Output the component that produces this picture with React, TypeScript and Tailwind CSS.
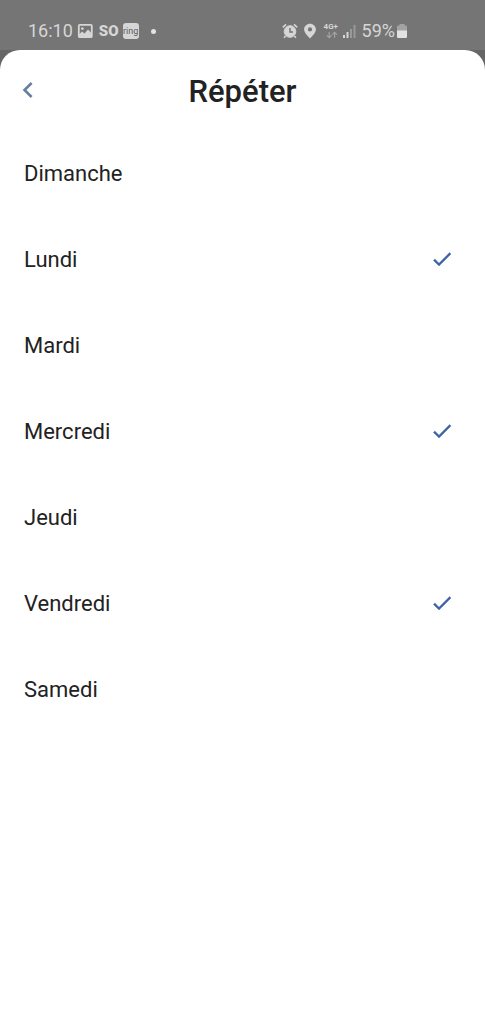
import { useState } from "react";

const days = [
  "Dimanche",
  "Lundi",
  "Mardi",
  "Mercredi",
  "Jeudi",
  "Vendredi",
  "Samedi",
];

function StatusBar() {
  return (
    <div className="flex h-[50px] items-center justify-between bg-[#757575] pt-3 pr-[78px] pl-7 text-lg leading-6 text-[#d6d6d6]">
      <div className="flex items-center">
        <span>16:10</span>
        <svg className="ml-1 size-4" viewBox="0 0 16 16" fill="none">
          <rect x="1.8" y="1.8" width="13" height="12.4" rx="1" stroke="currentColor" strokeWidth="1.8" />
          <circle cx="5.4" cy="5.6" r="1.3" fill="currentColor" />
          <path d="M2 14V11.5L5 8.5L7.5 10.5L11 6.5L14.4 10V14Z" fill="currentColor" />
        </svg>
        <span className="ml-1.5 text-[15px] font-black">SO</span>
        <span className="ml-1 flex size-4 items-center justify-center rounded-[3px] bg-[#d6d6d6] text-[9px] leading-4 text-[#5c5c5c]">
          ring
        </span>
        <span className="ml-3 size-[5px] rounded-full bg-[#e2e2e2]" />
      </div>
      <div className="flex items-center">
        <svg className="size-4" viewBox="0 0 16 16" fill="none" stroke="currentColor">
          <circle cx="8" cy="8.5" r="5.8" fill="currentColor" strokeWidth="1" />
          <path d="M8 5V9H11" stroke="#757575" strokeWidth="1.5" />
          <path d="M.8 4.4L4 1.4M15.2 4.4L12 1.4M3.6 13L2 14.8M12.4 13L14 14.8" strokeWidth="1.6" />
        </svg>
        <svg className="ml-1.5 h-4 w-3" viewBox="0 0 12 16" fill="currentColor">
          <path
            fillRule="evenodd"
            d="M6 .8C2.7 .8 .1 3.3 .1 6.4C.1 9.9 6 15.4 6 15.4S11.9 9.9 11.9 6.4C11.9 3.3 9.3 .8 6 .8ZM6 4.3A2.1 2.1 0 1 1 6 8.5A2.1 2.1 0 0 1 6 4.3Z"
          />
        </svg>
        <span className="ml-2 flex w-4 flex-col items-start">
          <span className="text-[8px] leading-2 font-bold">4G+</span>
          <svg className="ml-0.5 h-2 w-3" viewBox="0 0 12 8" fill="none" stroke="#a3a3a3" strokeWidth="1.2">
            <path d="M3.2 1V6.5M.8 4.3L3.2 6.7L5.6 4.3M8.6 7V1.5M6.2 3.7L8.6 1.3L11 3.7" />
          </svg>
        </span>
        <svg className="ml-0.5 h-4 w-3.5" viewBox="0 0 14 16">
          <path d="M1 12H3V15H1ZM4.5 9H6.5V15H4.5Z" fill="#d6d6d6" />
          <path d="M8 6H10V15H8ZM11.5 2H13.5V15H11.5Z" fill="#999999" />
        </svg>
        <span className="ml-1.5">59%</span>
        <svg className="ml-0.5 h-4 w-2.5" viewBox="0 0 10 16">
          <path d="M2.5 1H7.5V2.5H9A1 1 0 0 1 10 3.5V8H0V3.5A1 1 0 0 1 1 2.5H2.5Z" fill="#a3a3a3" />
          <path d="M0 7.5H10V14A1 1 0 0 1 9 15H1A1 1 0 0 1 0 14Z" fill="#e2e2e2" />
        </svg>
      </div>
    </div>
  );
}

function DayRow({
  day,
  checked,
  onToggle,
}: {
  day: string;
  checked: boolean;
  onToggle: () => void;
}) {
  return (
    <li>
      <label className="relative flex h-[86px] cursor-pointer items-center justify-between pr-[31px] pl-6 text-[22px]">
        {day}
        <input
          type="checkbox"
          checked={checked}
          onChange={onToggle}
          className="peer sr-only"
        />
        <svg
          className="size-6 fill-[#3d62a8] stroke-[#3d62a8] opacity-0 peer-checked:opacity-100"
          strokeWidth="0.4"
          viewBox="0 0 24 24">
          <path d="M9 16.17L4.83 12l-1.42 1.41L9 19 21 7l-1.41-1.41z" />
        </svg>
      </label>
    </li>
  );
}

export default function App() {
  const [selected, setSelected] = useState(["Lundi", "Mercredi", "Vendredi"]);

  const toggle = (day: string) =>
    setSelected((prev) =>
      prev.includes(day) ? prev.filter((d) => d !== day) : [...prev, day],
    );

  return (
    <div className="flex min-h-screen flex-col bg-[#666666] font-[Roboto,sans-serif]">
      <StatusBar />
      <main className="flex-1 rounded-t-[20px] bg-white text-[#222222]">
        <header className="grid h-20 grid-cols-[48px_1fr_48px] items-center">
          <button type="button" aria-label="Retour" className="pl-3">
            <svg className="size-8 fill-[#67809b]" viewBox="0 0 24 24">
              <path d="M15.41 7.41L14 6l-6 6 6 6 1.41-1.41L10.83 12z" />
            </svg>
          </button>
          <h1 className="pt-1 text-center text-[31px] leading-9 font-medium">Répéter</h1>
        </header>
        <ul>
          {days.map((day) => (
            <DayRow
              key={day}
              day={day}
              checked={selected.includes(day)}
              onToggle={() => toggle(day)}
            />
          ))}
        </ul>
      </main>
    </div>
  );
}
